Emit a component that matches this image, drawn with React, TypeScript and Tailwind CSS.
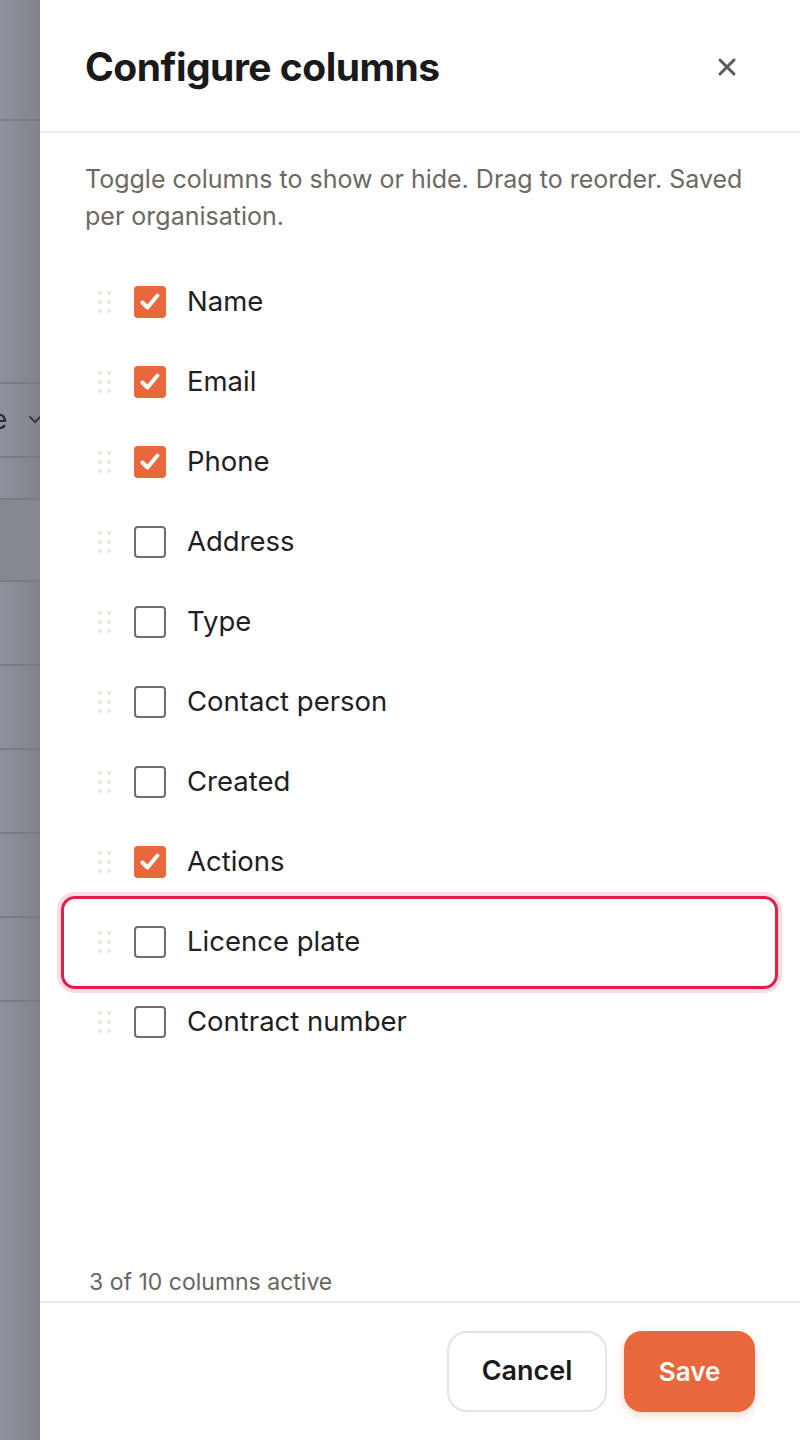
import React from "react";

const rows: { label: string; checked: boolean; highlight?: boolean }[] = [
  { label: "Name", checked: true },
  { label: "Email", checked: true },
  { label: "Phone", checked: true },
  { label: "Address", checked: false },
  { label: "Type", checked: false },
  { label: "Contact person", checked: false },
  { label: "Created", checked: false },
  { label: "Actions", checked: true },
  { label: "Licence plate", checked: false, highlight: true },
  { label: "Contract number", checked: false },
];

function Handle() {
  return (
    <div className="w-[49px] pl-[13px] flex items-center">
      <div className="grid grid-cols-2 gap-x-[5px] gap-y-[5px]">
        {Array.from({ length: 6 }).map((_, i) => (
          <span key={i} className="block w-[4px] h-[4px] rounded-full bg-[#ebe5de]" />
        ))}
      </div>
    </div>
  );
}

function Checkbox({ checked }: { checked: boolean }) {
  if (checked) {
    return (
      <div className="w-[32px] h-[32px] rounded-[4px] bg-[#e8673c] flex items-center justify-center shrink-0">
        <svg width="26" height="26" viewBox="0 0 26 26" fill="none">
          <path d="M5.5 13.5 L10.5 18.5 L20.5 6.5" stroke="white" strokeWidth="4" strokeLinecap="round" strokeLinejoin="round" />
        </svg>
      </div>
    );
  }
  return <div className="w-[32px] h-[32px] rounded-[4px] border-2 border-[#6f6f6f] bg-white shrink-0" />;
}

function Strip() {
  const line = <div className="h-[2px] bg-[#7a7c84]" />;
  return (
    <div className="w-[40px] shrink-0 bg-gradient-to-r from-[#8f929c] to-[#81838c] flex flex-col overflow-hidden">
      <div className="h-[119px]" />
      {line}
      <div className="h-[261px]" />
      {line}
      <div className="h-[72px] flex items-center relative">
        <span className="absolute left-[-8px] text-[26px] text-[#2a2a2e] leading-none">e</span>
        <svg className="absolute left-[28px]" width="16" height="12" viewBox="0 0 16 12" fill="none">
          <path d="M2 3 L7 8 L12 3" stroke="#3a3a3e" strokeWidth="2" strokeLinecap="round" />
        </svg>
      </div>
      {line}
      <div className="h-[40px]" />
      {line}
      <div className="h-[80px] bg-[#86888f]" />
      {line}
      <div className="h-[82px]" />
      {line}
      <div className="h-[82px]" />
      {line}
      <div className="h-[82px]" />
      {line}
      <div className="h-[82px]" />
      {line}
      <div className="h-[82px]" />
      {line}
      <div className="flex-1" />
    </div>
  );
}

export default function App() {
  return (
    <div className="flex w-[800px] h-[1440px] overflow-hidden" style={{ fontFamily: "Inter, 'Noto Sans', sans-serif" }}>
      <Strip />
      <div className="flex-1 bg-white flex flex-col">
        <div className="h-[133px] border-b-2 border-[#efebe6] flex items-center justify-between pl-[45px] pr-[63px] pt-[2px]">
          <h1 className="text-[39px] font-bold tracking-[-0.5px] text-[#1a1a1a] leading-none">Configure columns</h1>
          <svg width="20" height="20" viewBox="0 0 20 20" fill="none">
            <path d="M3 3 L17 17 M17 3 L3 17" stroke="#5f5a55" strokeWidth="3" strokeLinecap="round" />
          </svg>
        </div>
        <div className="flex-1 flex flex-col px-[45px] pt-[28px]">
          <p className="text-[25px] leading-[37px] text-[#6e6862]">
            Toggle columns to show or hide. Drag to reorder. Saved per organisation.
          </p>
          <div className="mt-[27px] flex flex-col">
            {rows.map((r) => (
              <div key={r.label} className="relative h-[80px] flex items-center">
                {r.highlight && (
                  <span className="absolute left-[-24px] right-[-23px] top-[-6px] bottom-[-7px] rounded-[14px] border-[3px] border-[#e11d48] shadow-[0_0_0_4px_#fcdde3] pointer-events-none" />
                )}
                <Handle />
                <Checkbox checked={r.checked} />
                <span className="ml-[21px] text-[27.5px] text-[#1f1f1f] leading-none">{r.label}</span>
              </div>
            ))}
          </div>
          <div className="flex-1" />
          <div className="pl-[4px] pb-[5px] text-[23px] text-[#6b655f] leading-[28px]">3 of 10 columns active</div>
        </div>
        <div className="h-[139px] border-t-2 border-[#efebe6] flex items-center justify-end gap-[17px] pr-[45px]">
          <button className="w-[160px] h-[81px] rounded-[20px] border-2 border-[#e9e4dc] bg-white text-[27px] font-semibold text-[#1a1a1a]">
            Cancel
          </button>
          <button className="w-[131px] h-[81px] rounded-[18px] bg-[#e8673c] text-[26px] font-semibold text-white shadow-[0_4px_10px_rgba(232,103,60,0.25)]">
            Save
          </button>
        </div>
      </div>
    </div>
  );
}
